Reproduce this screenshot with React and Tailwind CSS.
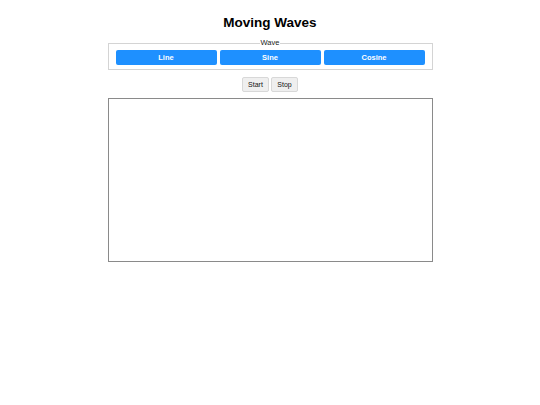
import React, { useState } from 'react';

const App = () => {
    const [wave, setWave] = useState("Line");
    const [running, setRunning] = useState(false);

    const waves = ["Line", "Sine", "Cosine"];

    return (
        <div className="w-[540px] h-[405px] bg-white text-black" style={{ fontFamily: '"Liberation Sans", Arial, sans-serif' }}>
            <h1 className="pt-[15px] text-center text-[13.5px] leading-[16px] font-bold">Moving Waves</h1>

            <fieldset className="mx-auto mt-[7px] w-[325px] border border-[#d4d4d4] px-[7px] pt-[2px] pb-[4px]">
                <legend className="mx-auto px-[1px] text-[7.5px] leading-[10px] text-[#222]">Wave</legend>
                <div className="flex gap-[3px]">
                    {waves.map((w) => (
                        <button
                            key={w}
                            onClick={() => setWave(w)}
                            className="flex-1 h-[15px] rounded-[2px] bg-[#1e90ff] text-white text-[7.5px] font-bold leading-[15px]"
                        >
                            {w}
                        </button>
                    ))}
                </div>
            </fieldset>

            <div className="mt-[7px] flex justify-center gap-[2px]">
                <button
                    onClick={() => setRunning(true)}
                    className="w-[27px] h-[15px] rounded-[2px] border border-[#d8d8d8] bg-[#efefef] text-[7px] leading-[13px] text-[#111]"
                >
                    Start
                </button>
                <button
                    onClick={() => setRunning(false)}
                    className="w-[27px] h-[15px] rounded-[2px] border border-[#d8d8d8] bg-[#efefef] text-[7px] leading-[13px] text-[#111]"
                >
                    Stop
                </button>
            </div>

            <div className="mx-auto mt-[6px] w-[325px] h-[164px] border border-[#8a8a8a] bg-white" data-wave={wave} data-running={running} />
        </div>
    );
};

export default App;
